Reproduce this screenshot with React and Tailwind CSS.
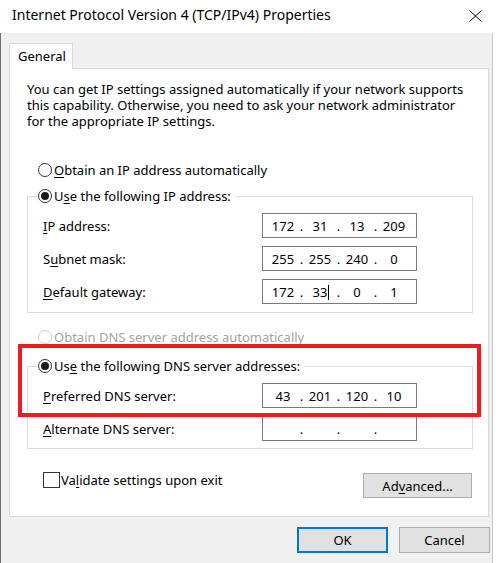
import { Fragment } from 'react';

const ipRows = [
    { label: 'IP address:', key: 'I', rest: 'P address:', parts: ['172', '31', '13', '209'] },
    { label: 'Subnet mask:', pre: 'S', key: 'u', rest: 'bnet mask:', parts: ['255', '255', '240', '0'] },
    { label: 'Default gateway:', key: 'D', rest: 'efault gateway:', parts: ['172', '33', '0', '1'], caret: 1 },
];

function Radio({ checked, disabled }) {
    return (
        <span
            className={`flex h-[14px] w-[14px] shrink-0 items-center justify-center rounded-full border bg-white ${
                disabled ? 'border-[#cccccc]' : 'border-[#333333]'
            }`}
        >
            {checked && <span className="h-[8px] w-[8px] rounded-full bg-[#1a1a1a]" />}
        </span>
    );
}

function Key({ children }) {
    return <span className="underline decoration-1 underline-offset-2">{children}</span>;
}

function IpField({ parts = ['', '', '', ''], caret }) {
    return (
        <div className="flex h-[25px] w-[155px] items-center border border-[#7a7a7a] bg-white pl-[5px]">
            {parts.map((p, i) => (
                <Fragment key={i}>
                    {i > 0 && <span className="w-[7px] text-center">.</span>}
                    <span className="relative w-[30px] text-center">
                        {p}
                        {caret === i && (
                            <span className="absolute top-[1px] ml-[1px] h-[15px] w-px bg-black" />
                        )}
                    </span>
                </Fragment>
            ))}
        </div>
    );
}

function GroupBox({ legend, children, pb }) {
    return (
        <fieldset className={`w-[446px] border border-[#dcdcdc] ${pb}`}>
            <legend className="ml-[9px] pl-[1px] pr-[4px]">
                <span className="flex h-[16px] items-center gap-[2px]">
                    <Radio checked />
                    {legend}
                </span>
            </legend>
            <div className="flex flex-col gap-[8px] pl-[15px] pt-[9px]">{children}</div>
        </fieldset>
    );
}

function Row({ label, children }) {
    return (
        <div className="flex items-center">
            <span className="w-[219px]">{label}</span>
            {children}
        </div>
    );
}

export default function App() {
    return (
        <div className="h-[563px] w-[496px] bg-white font-['Segoe_UI','Noto_Sans',sans-serif] text-[13px] leading-[16px] text-black">
            <div className="w-[493px]">
                {/* Title bar */}
                <div className="flex h-[33px] items-center justify-between bg-white pb-[3px] pl-[12px] pr-[11px]">
                    <span className="text-[14px]">Internet Protocol Version 4 (TCP/IPv4) Properties</span>
                    <svg width="13" height="12" viewBox="0 0 13 12" className="mt-[2px]">
                        <path d="M0.5 0.5 L12.5 11.5 M12.5 0.5 L0.5 11.5" stroke="#000" strokeWidth="1" fill="none" />
                    </svg>
                </div>

                {/* Body */}
                <div className="h-[530px] border-l border-r border-l-[#6f6f6f] border-r-[#c4c4c4] bg-[#f0f0f0] pl-[8px] pr-[3px] pt-[10px]">
                    <div className="flex">
                        <div className="relative z-10 -mb-px flex h-[26px] w-[64px] items-center border border-b-0 border-[#d9d9d9] bg-white pb-[1px] pl-[8px]">
                            General
                        </div>
                    </div>

                    <div className="relative h-[449px] w-[480px] border border-[#d9d9d9] bg-white pl-[17px] pt-[12px]">
                        <p className="whitespace-nowrap">
                            You can get IP settings assigned automatically if your network supports
                            <br />
                            this capability. Otherwise, you need to ask your network administrator
                            <br />
                            for the appropriate IP settings.
                        </p>

                        <div className="ml-[11px] mt-[33px] flex h-[16px] items-center gap-[2px]">
                            <Radio />
                            <span>
                                <Key>O</Key>btain an IP address automatically
                            </span>
                        </div>

                        <div className="mt-[10px]">
                            <GroupBox
                                pb="pb-[8px]"
                                legend={
                                    <span>
                                        U<Key>s</Key>e the following IP address:
                                    </span>
                                }
                            >
                                {ipRows.map((r) => (
                                    <Row
                                        key={r.label}
                                        label={
                                            <>
                                                {r.pre}
                                                <Key>{r.key}</Key>
                                                {r.rest}
                                            </>
                                        }
                                    >
                                        <IpField parts={r.parts} caret={r.caret} />
                                    </Row>
                                ))}
                            </GroupBox>
                        </div>

                        <div className="ml-[11px] mt-[16px] flex h-[16px] items-center gap-[2px] text-[#a3a3a3]">
                            <Radio disabled />
                            <span>
                                O<Key>b</Key>tain DNS server address automatically
                            </span>
                        </div>

                        <div className="mt-[13px]">
                            <GroupBox
                                pb="pb-[7px]"
                                legend={
                                    <span>
                                        Us<Key>e</Key> the following DNS server addresses:
                                    </span>
                                }
                            >
                                <Row
                                    label={
                                        <>
                                            <Key>P</Key>referred DNS server:
                                        </>
                                    }
                                >
                                    <IpField parts={['43', '201', '120', '10']} />
                                </Row>
                                <Row
                                    label={
                                        <>
                                            <Key>A</Key>lternate DNS server:
                                        </>
                                    }
                                >
                                    <IpField />
                                </Row>
                            </GroupBox>
                        </div>

                        <div className="mt-[23px] flex items-start justify-between pr-[16px]">
                            <label className="ml-[16px] flex h-[16px] items-center gap-[1px]">
                                <span className="h-[16px] w-[17px] border border-[#333333] bg-white" />
                                <span>
                                    Va<Key>l</Key>idate settings upon exit
                                </span>
                            </label>
                            <button className="mt-[1px] flex h-[25px] w-[109px] items-center justify-center border border-[#adadad] bg-[#e1e1e1]">
                                <span>
                                    Ad<Key>v</Key>anced...
                                </span>
                            </button>
                        </div>

                        {/* annotation */}
                        <div className="pointer-events-none absolute left-[8px] top-[275px] h-[73px] w-[463px] border-[4px] border-[#ed1c24]" />
                    </div>

                    <div className="-mr-px mt-[10px] flex justify-end gap-[11px]">
                        <button className="h-[26px] w-[91px] border-2 border-[#0078d7] bg-[#e1e1e1]">OK</button>
                        <button className="h-[26px] w-[91px] border border-[#adadad] bg-[#e1e1e1]">Cancel</button>
                    </div>
                </div>
            </div>
        </div>
    );
}
